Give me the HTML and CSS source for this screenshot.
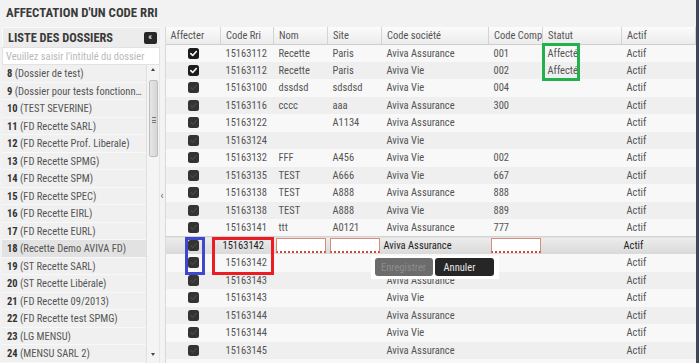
FILE: index.html
```html
<!DOCTYPE html>
<html lang="fr">
<head>
    <meta charset="UTF-8">
    <title>Affectation d'un code RRI</title>
    <link rel="stylesheet" href="styles.css">
</head>
<body>
    <div class="window">
        <div class="page-title">AFFECTATION D'UN CODE RRI</div>

        <div class="main">
            <!-- panneau de gauche : liste des dossiers -->
            <div class="sidebar">
                <div class="side-head">
                    <span>LISTE DES DOSSIERS</span>
                    <button class="collapse-btn">«</button>
                </div>
                <input class="search" type="text" placeholder="Veuillez saisir l'intitulé du dossier">
                <div class="list-wrap">
                    <ul id="dossier-list" class="dossier-list"></ul>
                    <div class="scrollbar">
                        <span class="arrow up"></span>
                        <div class="thumb"><i></i></div>
                        <span class="arrow down"></span>
                    </div>
                </div>
            </div>

            <div class="splitter"><span>‹</span></div>

            <!-- grille des codes RRI -->
            <div class="grid-panel">
                <table class="grid">
                    <colgroup>
                        <col style="width:55px"><col style="width:53px"><col style="width:54px"><col style="width:54px">
                        <col style="width:107px"><col style="width:54px"><col style="width:79px"><col style="width:74px">
                    </colgroup>
                    <thead>
                        <tr>
                            <th>Affecter</th><th>Code Rri</th><th>Nom</th><th>Site</th>
                            <th>Code société</th><th>Code Compt</th><th>Statut</th><th>Actif</th>
                        </tr>
                    </thead>
                    <tbody id="grid-body"></tbody>
                </table>

                <div class="edit-actions">
                    <button class="btn-save" disabled>Enregistrer</button>
                    <button class="btn-cancel">Annuler</button>
                </div>
            </div>
        </div>

        <!-- encadrés d'annotation -->
        <div class="mark mark-green"></div>
        <div class="mark mark-red"></div>
        <div class="mark mark-blue"></div>
    </div>

    <script>
        // dossiers de la liste de gauche
        const dossiers = [
            ['8', 'Dossier de test'],
            ['9', 'Dossier pour tests fonctionn…', true],
            ['10', 'TEST SEVERINE'],
            ['11', 'FD Recette SARL'],
            ['12', 'FD Recette Prof. Liberale'],
            ['13', 'FD Recette SPMG'],
            ['14', 'FD Recette SPM'],
            ['15', 'FD Recette SPEC'],
            ['16', 'FD Recette EIRL'],
            ['17', 'FD Recette EURL'],
            ['18', 'Recette Demo AVIVA FD'],
            ['19', 'ST Recette SARL'],
            ['20', 'ST Recette Libérale'],
            ['21', 'FD Recette 09/2013'],
            ['22', 'FD Recette test SPMG'],
            ['23', 'LG MENSU'],
            ['24', 'MENSU SARL 2']
        ];

        const list = document.getElementById('dossier-list');
        dossiers.forEach(d => {
            const li = document.createElement('li');
            if (d[0] === '18') li.classList.add('selected');
            const label = d[2] ? ' (' + d[1] : ' (' + d[1] + ')';
            li.innerHTML = '<b>' + d[0] + '</b>' + label;
            list.appendChild(li);
        });

        // lignes de la grille : [coché, code, nom, site, société, compta, statut]
        const rows = [
            [true, '15163112', 'Recette', 'Paris', 'Aviva Assurance', '001', 'Affecté'],
            [true, '15163112', 'Recette', 'Paris', 'Aviva Vie', '002', 'Affecté'],
            [false, '15163100', 'dssdsd', 'sdsdsd', 'Aviva Vie', '004', ''],
            [false, '15163116', 'cccc', 'aaa', 'Aviva Assurance', '300', ''],
            [false, '15163122', '', 'A1134', 'Aviva Assurance', '', ''],
            [false, '15163124', '', '', 'Aviva Vie', '', ''],
            [false, '15163132', 'FFF', 'A456', 'Aviva Vie', '002', ''],
            [false, '15163135', 'TEST', 'A666', 'Aviva Vie', '667', ''],
            [false, '15163138', 'TEST', 'A888', 'Aviva Assurance', '888', ''],
            [false, '15163138', 'TEST', 'A888', 'Aviva Vie', '889', ''],
            [false, '15163141', 'ttt', 'A0121', 'Aviva Assurance', '777', ''],
            'edit',
            [false, '15163142', '', '', '', '', ''],
            [false, '15163143', '', '', 'Aviva Assurance', '', ''],
            [false, '15163143', '', '', 'Aviva Vie', '', ''],
            [false, '15163144', '', '', 'Aviva Assurance', '', ''],
            [false, '15163144', '', '', 'Aviva Vie', '', ''],
            [false, '15163145', '', '', 'Aviva Assurance', '', '']
        ];

        function checkbox(checked) {
            return '<svg class="chk ' + (checked ? 'on' : 'off') + '" viewBox="0 0 11 11">' +
                '<rect x="0" y="0" width="11" height="11" rx="2.5"/>' +
                '<path d="M2.8 5.6 L4.7 7.5 L8.3 3.5"/></svg>';
        }

        const body = document.getElementById('grid-body');
        rows.forEach(r => {
            const tr = document.createElement('tr');
            if (r === 'edit') {
                tr.className = 'editing';
                tr.innerHTML = '<td class="c-chk">' + checkbox(false) + '</td>' +
                    '<td>15163142</td>' +
                    '<td><input class="cell-input"></td>' +
                    '<td><input class="cell-input"></td>' +
                    '<td>Aviva Assurance</td>' +
                    '<td><input class="cell-input"></td>' +
                    '<td></td><td>Actif</td>';
            } else {
                tr.innerHTML = '<td class="c-chk">' + checkbox(r[0]) + '</td>' +
                    r.slice(1).map(v => '<td>' + v + '</td>').join('') +
                    '<td>Actif</td>';
            }
            body.appendChild(tr);
        });
    </script>
</body>
</html>
```

FILE: styles.css
```css
* {
    box-sizing: border-box;
}

html, body {
    margin: 0;
}

body {
    width: 699px;
    height: 363px;
    overflow: hidden;
    background-color: #f2f2f2;
    font-family: "Liberation Sans Narrow", "Roboto Condensed", "DejaVu Sans Condensed", "Liberation Sans", sans-serif;
    font-size: 10.5px;
    color: #555;
}

.window {
    position: relative;
    height: 363px;
    display: flex;
    flex-direction: column;
    border-right: 3px solid #3b4859;
}

.page-title {
    height: 27px;
    line-height: 25px;
    padding-left: 6px;
    font-weight: bold;
    font-size: 12.8px;
    color: #3a3a3a;
}

.main {
    flex: 1;
    display: flex;
    min-height: 0;
}

/* ---- liste des dossiers ---- */
.sidebar {
    width: 161px;
    padding-left: 2px;
    display: flex;
    flex-direction: column;
}

.side-head {
    height: 20px;
    display: flex;
    align-items: center;
    justify-content: space-between;
    padding: 0 3px 0 5px;
    background-color: #ececec;
    border-top: 1px solid #fbfbfb;
    border-left: 1px solid #fbfbfb;
}

.side-head span {
    font-weight: bold;
    font-size: 12.4px;
    color: #3a3a3a;
}

.collapse-btn {
    width: 13px;
    height: 12px;
    padding: 0;
    border: none;
    border-radius: 2px;
    background-color: #262626;
    color: #fff;
    font-size: 9px;
    line-height: 11px;
    font-family: inherit;
}

.search {
    height: 18px;
    margin: 0;
    padding: 0 3px;
    border: 1px solid #e2e2e2;
    background-color: #fff;
    font: inherit;
    color: #555;
}

.search::placeholder {
    color: #b9b9b9;
}

.list-wrap {
    flex: 1;
    display: flex;
    min-height: 0;
}

.dossier-list {
    flex: 1;
    list-style: none;
    margin: 0;
    padding: 0;
    overflow: hidden;
}

.dossier-list li {
    height: 17.5px;
    line-height: 17px;
    padding-left: 5px;
    background-color: #f0f0f0;
    border-bottom: 1px solid #f8f8f8;
    white-space: nowrap;
    overflow: hidden;
}

.dossier-list li b {
    color: #333;
}

.dossier-list li.selected {
    background-color: #e2e2e2;
}

.scrollbar {
    width: 14px;
    position: relative;
    background-color: #f4f4f4;
    border-left: 1px solid #e0e0e0;
    border-right: 1px solid #e6e6e6;
}

.scrollbar .thumb {
    position: absolute;
    left: 2px;
    top: 15px;
    width: 9px;
    height: 77px;
    border: 1px solid #bdbdbd;
    border-radius: 2px;
    background: linear-gradient(to right, #e6e6e6, #d6d6d6);
}

.scrollbar .thumb i {
    position: absolute;
    left: 2px;
    top: 36px;
    width: 4px;
    height: 6px;
    border-top: 1px solid #777;
    border-bottom: 1px solid #777;
}

.scrollbar .thumb i::after {
    content: "";
    position: absolute;
    left: 0;
    top: 1.5px;
    width: 4px;
    border-top: 1px solid #777;
}

.arrow {
    position: absolute;
    left: 4px;
    width: 0;
    height: 0;
    border-left: 2.5px solid transparent;
    border-right: 2.5px solid transparent;
}

.arrow.up {
    top: 3px;
    border-bottom: 3px solid #444;
}

.arrow.down {
    bottom: 7px;
    border-top: 3px solid #444;
}

.splitter {
    width: 5px;
    display: flex;
    align-items: center;
    justify-content: center;
    background-color: #f3f3f3;
    color: #666;
    font-size: 11px;
}

/* ---- grille ---- */
.grid-panel {
    flex: 1;
    position: relative;
    background-color: #f7f7f7;
    border-left: 1px solid #d9d9d9;
}

.grid {
    width: 530px;
    border-collapse: collapse;
    table-layout: fixed;
}

.grid th {
    height: 17px;
    padding: 0 5px;
    text-align: left;
    font-weight: normal;
    color: #555;
    background: linear-gradient(#fbfbfb, #ebebeb);
    border-right: 1px solid #d4d4d4;
    border-bottom: 1px solid #cecece;
    white-space: nowrap;
    overflow: hidden;
}

.grid td {
    height: 17.5px;
    padding: 0 5px;
    white-space: nowrap;
    overflow: hidden;
    background-color: #f8f8f8;
}

.grid tbody tr:nth-child(even) td {
    background-color: #efefef;
}

.grid td.c-chk {
    text-align: center;
    padding: 0;
}

.chk {
    width: 11px;
    height: 11px;
    display: block;
    margin: 0 auto;
}

.chk path {
    fill: none;
    stroke-width: 1.6;
    stroke-linecap: round;
    stroke-linejoin: round;
}

.chk.on rect { fill: #1c1c1c; }
.chk.on path { stroke: #fff; }
.chk.off rect { fill: #333; }
.chk.off path { stroke: #444; }

.grid tr.editing td {
    padding: 0 2px;
    color: #1e1e1e;
    background: linear-gradient(#ececec, #d9d9d9) !important;
    border-top: 1px solid #d2d2d2;
}

.cell-input {
    display: block;
    width: 100%;
    height: 15px;
    margin: 0;
    padding: 0;
    background-color: #fff;
    border: 1px solid #d98b7c;
    border-bottom: 2px dotted #cc4a36;
}

.edit-actions {
    position: absolute;
    left: 205px;
    top: 229px;
    width: 128px;
    height: 23px;
    padding: 2px 4px;
    display: flex;
    gap: 2px;
    background-color: #fff;
}

.edit-actions button {
    height: 18px;
    padding: 0;
    border: none;
    border-radius: 3px;
    font-family: inherit;
    font-size: 10.5px;
}

.btn-save {
    width: 58px;
    background-color: #6c6c6c;
    color: #8c8c8c;
}

.btn-cancel {
    width: 59px;
    background-color: #262626;
    color: #e6e6e6;
    text-align: left;
    padding-left: 9px !important;
}

/* ---- encadrés ---- */
.mark {
    position: absolute;
    border: 3px solid;
}

.mark-green {
    left: 542px;
    top: 43px;
    width: 38px;
    height: 38px;
    border-color: #22b14c;
}

.mark-red {
    left: 212px;
    top: 237px;
    width: 62px;
    height: 38px;
    border-color: #ed1c24;
}

.mark-blue {
    left: 185px;
    top: 237px;
    width: 20px;
    height: 38px;
    border-color: #3f48cc;
}
```
